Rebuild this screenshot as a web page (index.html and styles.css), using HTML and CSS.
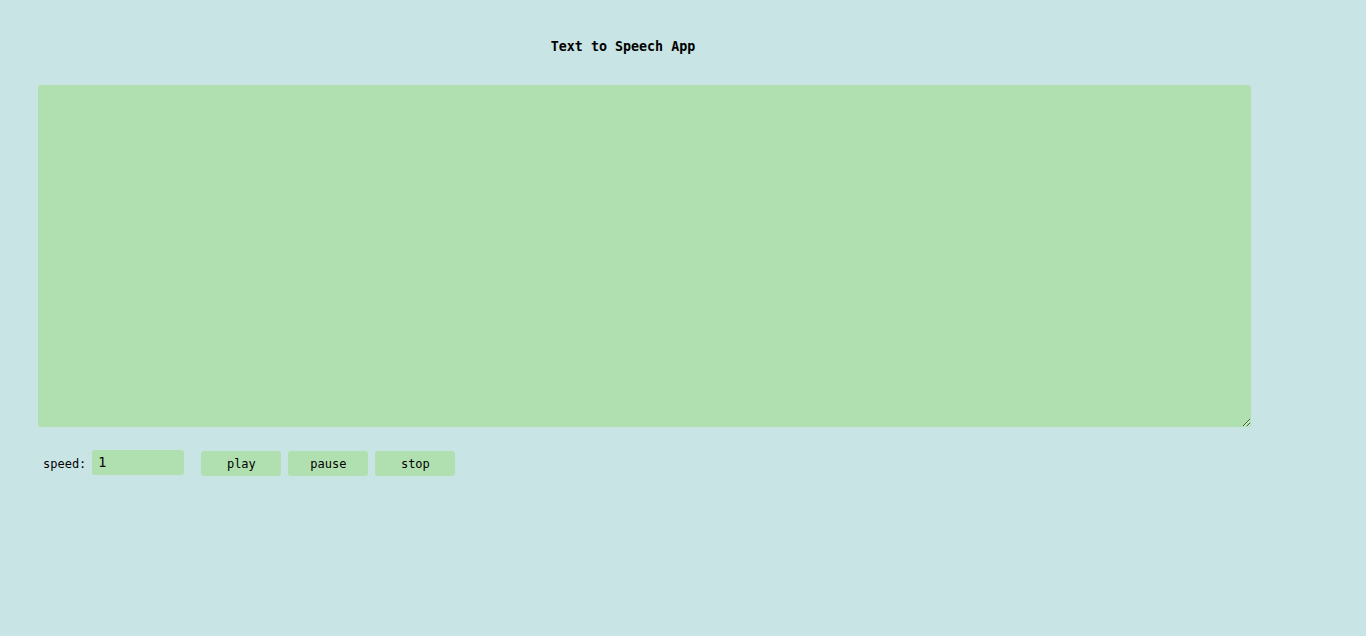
FILE: index.html
```html
<!DOCTYPE html>
<html>
<head>
<meta charset="utf-8">
<title>Text to Speech App</title>
<link rel="stylesheet" href="styles.css">
</head>
<body>
<div class="app">
  <h1 class="title">Text to Speech App</h1>
  <textarea class="text-input"></textarea>
  <div class="controls">
    <label class="speed-label" for="speed">speed:</label>
    <input class="speed-input" id="speed" type="text" value="1">
    <div class="buttons">
      <button class="btn">play</button>
      <button class="btn">pause</button>
      <button class="btn">stop</button>
    </div>
  </div>
</div>
</body>
</html>
```

FILE: styles.css
```css
html, body {
  margin: 0;
  padding: 0;
  background: #c9e4e5;
  height: 100%;
}
.app {
  font-family: "DejaVu Sans Mono", monospace;
  color: #000;
  padding-top: 39px;
}
.title {
  width: 1246px;
  margin: 0 0 30px 0;
  text-align: center;
  font-size: 13.33px;
  font-weight: bold;
  line-height: 16px;
}
.text-input {
  display: block;
  box-sizing: border-box;
  margin-left: 38px;
  width: 1213px;
  height: 342px;
  background: #b1e0b0;
  border: none;
  border-radius: 3px;
  outline: none;
  font-family: "DejaVu Sans Mono", monospace;
  font-size: 13.33px;
}
.controls {
  display: flex;
  align-items: flex-start;
  margin-top: 23px;
  padding-left: 43px;
}
.speed-label {
  font-size: 12px;
  line-height: 16px;
  margin-top: 6px;
  margin-right: 6px;
}
.speed-input {
  box-sizing: border-box;
  width: 92px;
  height: 25px;
  background: #b1e0b0;
  border: none;
  border-radius: 3px;
  outline: none;
  padding: 0 0 0 6px;
  font-family: "DejaVu Sans Mono", monospace;
  font-size: 13.33px;
  color: #000;
}
.buttons {
  display: flex;
  gap: 7px;
  margin-left: 17px;
  margin-top: 1px;
}
.btn {
  box-sizing: border-box;
  width: 80px;
  height: 25px;
  background: #b1e0b0;
  border: none;
  border-radius: 3px;
  padding: 0;
  font-family: "DejaVu Sans Mono", monospace;
  font-size: 12px;
  color: #000;
}
```
